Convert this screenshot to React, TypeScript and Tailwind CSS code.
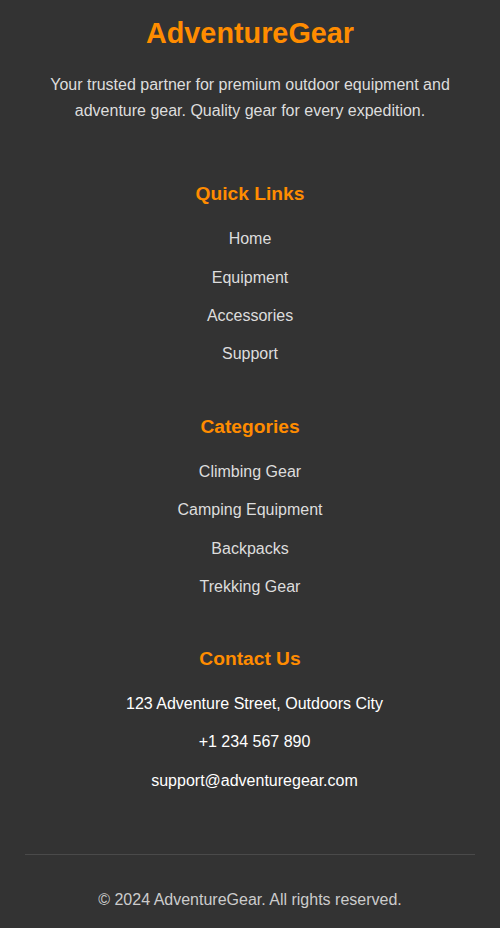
const quickLinks = ["Home", "Equipment", "Accessories", "Support"];
const categories = ["Climbing Gear", "Camping Equipment", "Backpacks", "Trekking Gear"];
const contact = ["123 Adventure Street, Outdoors City", "+1 234 567 890", "support@adventuregear.com"];

function FooterSection({
  title,
  items,
  itemClass,
  className = "",
}: {
  title: string;
  items: string[];
  itemClass: string;
  className?: string;
}) {
  return (
    <div className={`flex flex-col items-center ${className}`}>
      <h3 className="text-[19.2px] leading-[22px] font-bold text-[#ff8c00]">{title}</h3>
      <ul className="mt-[21px] flex flex-col items-center gap-[12.8px]">
        {items.map((item) => (
          <li key={item} className={`text-base leading-[25.6px] ${itemClass}`}>
            {item}
          </li>
        ))}
      </ul>
    </div>
  );
}

export default function App() {
  return (
    <footer className="min-h-[928px] bg-[#333333] px-[25px] pt-4 text-center font-['Liberation_Sans',Arial,sans-serif]">
      <div className="flex flex-col items-center">
        <h2 className="text-[28.8px] leading-[34px] font-bold text-[#ff8c00]">AdventureGear</h2>
        <p className="mt-[22px] text-base leading-[25.6px] text-[#dddddd]">
          Your trusted partner for premium outdoor equipment and adventure gear. Quality gear for every expedition.
        </p>
      </div>

      <FooterSection title="Quick Links" items={quickLinks} itemClass="text-[#dddddd]" className="mt-[60px]" />
      <FooterSection title="Categories" items={categories} itemClass="text-[#dddddd]" className="mt-[49px]" />
      <FooterSection title="Contact Us" items={contact} itemClass="text-white pl-[9px]" className="mt-[48px]" />

      <div className="mt-[61px] border-t border-[#4a4a4a] pt-[32px]">
        <p className="text-base leading-[25.6px] text-[#cccccc]">© 2024 AdventureGear. All rights reserved.</p>
      </div>
    </footer>
  );
}
